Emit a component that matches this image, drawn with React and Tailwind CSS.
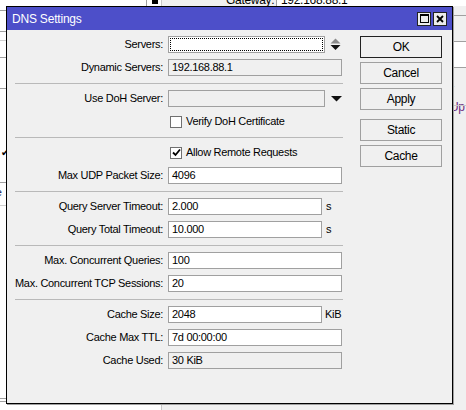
import React from 'react';

const Field = ({ value = '', width = 'w-[174px]', gray = false, focus = false }) => (
    <div className={`${width} h-[17px] border border-[#a0a0a0] ${gray ? 'bg-[#f0f0f0]' : 'bg-white'} flex items-center`}>
        {focus ? (
            <div className="m-[1px] h-[13px] flex-1 border border-dotted border-black" />
        ) : (
            <span className="pl-[3px] leading-none text-black">{value}</span>
        )}
    </div>
);

const Row = ({ label, children }) => (
    <div className="h-[23px] flex items-center">
        <div className="w-[149px] text-right pr-[1px] text-black">{label}</div>
        <div className="ml-[4px] flex items-center">{children}</div>
    </div>
);

const Sep = () => (
    <div className="h-[8px] flex items-center">
        <div className="w-[328px] h-px bg-[#b9b9b9]" />
    </div>
);

const Check = ({ label, checked }) => (
    <div className="h-[23px] flex items-center pl-[155px]">
        <div className="w-[12px] h-[12px] border border-[#707070] bg-white flex items-center justify-center">
            {checked && (
                <svg width="9" height="9" viewBox="0 0 9 9">
                    <path d="M1 4.5 L3.5 7 L8 1.5" fill="none" stroke="black" strokeWidth="1.8" />
                </svg>
            )}
        </div>
        <span className="ml-[4px] text-black">{label}</span>
    </div>
);

const Btn = ({ children, primary, className = '' }) => (
    <button className={`w-[82px] h-[22px] bg-[#f0f0f0] border ${primary ? 'border-[#222]' : 'border-[#a0a0a0]'} text-black text-[12px] flex items-center justify-center ${className}`}>
        {children}
    </button>
);

const Spinner = () => (
    <svg width="11" height="13" viewBox="0 0 11 13" className="ml-[5px]">
        <path d="M0.5 5.5 L5.5 0.5 L10.5 5.5 Z" fill="#8a8a8a" />
        <path d="M0.5 7 L10.5 7 L5.5 12 Z" fill="#111" />
    </svg>
);

const DropArrow = () => (
    <svg width="11" height="6" viewBox="0 0 11 6" className="ml-[6px]">
        <path d="M0 0 L11 0 L5.5 5.5 Z" fill="#111" />
    </svg>
);

export default function App() {
    return (
        <div className="relative w-[466px] h-[410px] overflow-hidden bg-[#f0f0f0] font-['Liberation_Sans',Arial,sans-serif] text-[11px] tracking-[-0.3px]">
            {/* background window behind the dialog */}
            <div className="absolute left-0 top-0 w-[162px] h-[410px] bg-white border-r border-[#c8c8c8]">
                <div className="absolute left-0 top-[10px] w-[146px] h-px bg-[#a0a0a0]" />
                <div className="absolute left-0 top-[31px] w-full h-px bg-[#a0a0a0]" />
                <div className="absolute left-0 top-[40px] w-full h-px bg-[#d0d0d0]" />
                <div className="absolute left-0 top-[57px] w-full h-px bg-[#a0a0a0]" />
                <div className="absolute left-0 top-[88px] w-full h-px bg-[#a0a0a0]" />
                <div className="absolute left-[1px] top-[145px] text-[10px]">✔</div>
                <div className="absolute left-0 top-[182px] w-full h-px bg-[#a0a0a0]" />
                <div className="absolute left-[-10px] top-[187px] leading-[10px] text-[#102060]">ne<br />0:</div>
                <div className="absolute left-0 top-[205px] w-full h-px bg-[#d0d0d0]" />
                <div className="absolute left-0 top-[398px] w-full h-px bg-[#a0a0a0]" />
                <div className="absolute left-0 top-[401px] w-full h-px bg-[#a0a0a0]" />
                <div className="absolute left-[146px] top-0 w-px h-[8px] bg-[#a0a0a0]" />
                <div className="absolute left-[152px] top-[-2px] w-[6px] h-[6px] bg-black" />
            </div>
            <div className="absolute left-[226px] top-[-9px] text-[12px] text-black">Gateway:</div>
            <div className="absolute left-[276px] top-0 w-[200px] h-[6px] bg-white border-l border-[#a0a0a0]">
                <div className="absolute left-[4px] top-[-9px] text-[12px] text-black">192.168.88.1</div>
            </div>
            <div className="absolute left-[452px] top-[15px] w-[14px] h-px bg-[#a0a0a0]" />
            <div className="absolute left-[452px] top-[41px] w-[14px] h-[27px] bg-white border-y border-[#a0a0a0]" />
            <div className="absolute left-[450px] top-[80px] text-[12px] text-[#6a2a80]">r Up</div>
            <div className="absolute left-[452px] top-[105px] w-[14px] h-px bg-[#c8c8c8]" />

            {/* dialog */}
            <div className="absolute left-[6px] top-[6px] w-[447px] h-[398px] border border-black bg-[#f0f0f0] flex flex-col shadow-[1px_1px_0_#a0a0a0]">
                <div className="h-[23px] bg-[#4d4fc9] flex items-center pl-[5px] pr-[5px]">
                    <span className="text-white text-[12px] tracking-[-0.2px]">DNS Settings</span>
                    <div className="ml-auto flex gap-[2px]">
                        <div className="w-[14px] h-[14px] bg-[#ececec] border border-[#222] flex items-center justify-center">
                            <div className="w-[9px] h-[9px] border border-black border-t-2" />
                        </div>
                        <div className="w-[14px] h-[14px] bg-[#ececec] border border-[#222] flex items-center justify-center">
                            <svg width="8" height="8" viewBox="0 0 8 8">
                                <path d="M1 1 L7 7 M7 1 L1 7" stroke="black" strokeWidth="1.8" />
                            </svg>
                        </div>
                    </div>
                </div>
                <div className="flex pl-[8px] pt-[3px]">
                    <div className="flex flex-col w-[328px]">
                        <Row label="Servers:">
                            <Field width="w-[157px]" focus />
                            <Spinner />
                        </Row>
                        <Row label="Dynamic Servers:">
                            <Field value="192.168.88.1" gray />
                        </Row>
                        <Sep />
                        <Row label="Use DoH Server:">
                            <Field width="w-[157px]" gray />
                            <DropArrow />
                        </Row>
                        <Check label="Verify DoH Certificate" />
                        <Sep />
                        <Check label="Allow Remote Requests" checked />
                        <Row label="Max UDP Packet Size:">
                            <Field value="4096" />
                        </Row>
                        <Sep />
                        <Row label="Query Server Timeout:">
                            <Field value="2.000" width="w-[154px]" />
                            <span className="ml-[4px]">s</span>
                        </Row>
                        <Row label="Query Total Timeout:">
                            <Field value="10.000" width="w-[154px]" />
                            <span className="ml-[4px]">s</span>
                        </Row>
                        <Sep />
                        <Row label="Max. Concurrent Queries:">
                            <Field value="100" />
                        </Row>
                        <Row label="Max. Concurrent TCP Sessions:">
                            <Field value="20" />
                        </Row>
                        <Sep />
                        <Row label="Cache Size:">
                            <Field value="2048" width="w-[154px]" />
                            <span className="ml-[3px]">KiB</span>
                        </Row>
                        <Row label="Cache Max TTL:">
                            <Field value="7d 00:00:00" />
                        </Row>
                        <Row label="Cache Used:">
                            <Field value="30 KiB" gray />
                        </Row>
                    </div>
                    <div className="ml-[17px] mt-[3px] flex flex-col">
                        <Btn primary>OK</Btn>
                        <Btn className="mt-[4px]">Cancel</Btn>
                        <Btn className="mt-[4px]">Apply</Btn>
                        <Btn className="mt-[9px]">Static</Btn>
                        <Btn className="mt-[4px]">Cache</Btn>
                    </div>
                </div>
            </div>
        </div>
    );
}
